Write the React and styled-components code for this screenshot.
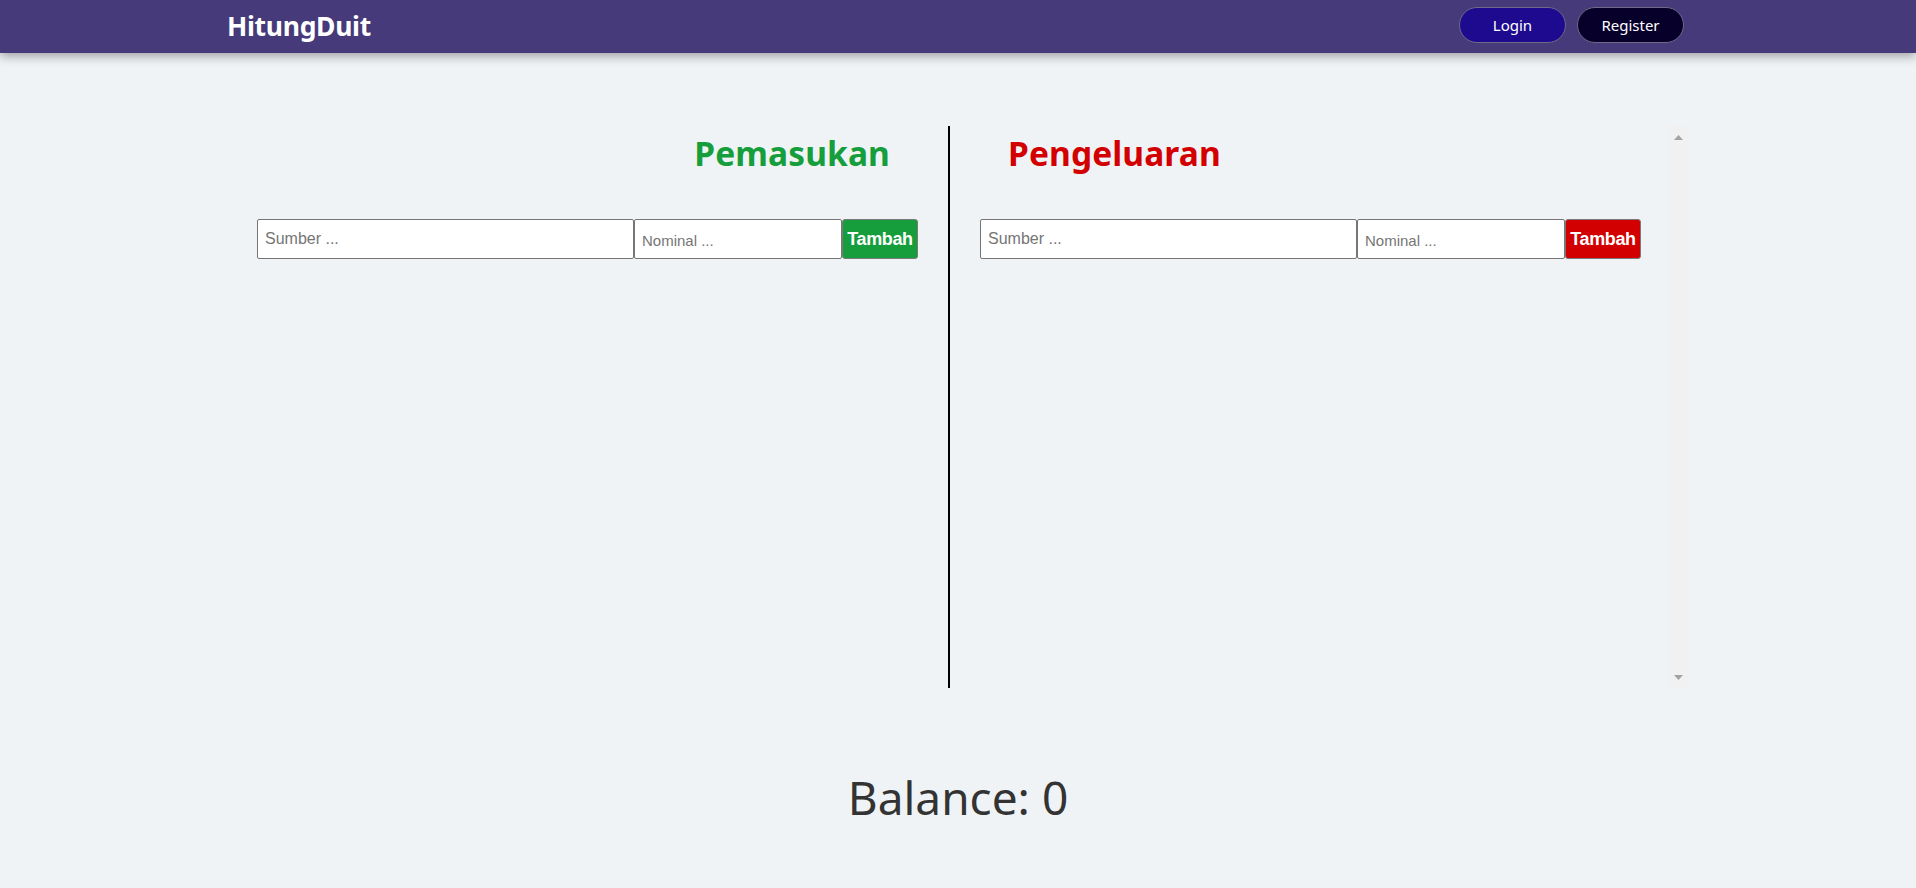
import React from "react";
import styled, { createGlobalStyle } from "styled-components";

const GlobalStyle = createGlobalStyle`
  * {
    box-sizing: border-box;
  }
  body {
    margin: 0;
    background-color: #eff3f6;
    font-family: "Noto Sans", "Open Sans", sans-serif;
  }
`;

const Arrow = ({ down }) => (
  <svg width="9" height="5" viewBox="0 0 9 5">
    <polygon points={down ? "0,0 9,0 4.5,5" : "4.5,0 9,5 0,5"} fill="#a3a3a3" />
  </svg>
);

const App = () => {
  return (
    <>
      <GlobalStyle />
      <Navbar>
        <NavInner>
          <Logo>HitungDuit</Logo>
          <NavButtons>
            <NavButton $bg="#1e0a8e">Login</NavButton>
            <NavButton $bg="#07002b">Register</NavButton>
          </NavButtons>
        </NavInner>
      </Navbar>
      <Main>
        <Board>
          <Columns>
            <Column $side="left">
              <Heading $color="#159e3b" $align="right">
                Pemasukan
              </Heading>
              <InputRow>
                <SourceInput placeholder="Sumber ..." />
                <AmountInput placeholder="Nominal ..." />
                <AddButton $bg="#159e3b">Tambah</AddButton>
              </InputRow>
            </Column>
            <Column $side="right">
              <Heading $color="#d20000" $align="left">
                Pengeluaran
              </Heading>
              <InputRow>
                <SourceInput placeholder="Sumber ..." />
                <AmountInput placeholder="Nominal ..." />
                <AddButton $bg="#d20000">Tambah</AddButton>
              </InputRow>
            </Column>
          </Columns>
          <ScrollTrack>
            <Arrow />
            <Arrow down />
          </ScrollTrack>
        </Board>
        <Balance>Balance: 0</Balance>
      </Main>
    </>
  );
};

export default App;

const Navbar = styled.nav`
  height: 53px;
  background-color: #463a7a;
  box-shadow: 0 3px 10px rgba(0, 0, 0, 0.35);
  position: relative;
  z-index: 1;
`;

const NavInner = styled.div`
  width: 1462px;
  height: 100%;
  margin: 0 auto;
  display: flex;
  align-items: center;
  justify-content: space-between;
  padding-right: 5px;
`;

const Logo = styled.div`
  color: #fff;
  font-size: 26.5px;
  font-weight: 700;
  letter-spacing: -0.3px;
  margin-top: -2px;
`;

const NavButtons = styled.div`
  display: flex;
  gap: 11px;
  margin-top: -3px;
`;

const NavButton = styled.button`
  width: 107px;
  height: 36px;
  border-radius: 18px;
  border: 1px solid #6f6a86;
  background-color: ${(p) => p.$bg};
  color: #fff;
  font-family: "Noto Sans", sans-serif;
  font-size: 15px;
  cursor: pointer;
`;

const Main = styled.main`
  padding-top: 73px;
`;

const Board = styled.div`
  width: 1462px;
  height: 562px;
  margin: 0 auto;
  display: flex;
`;

const Columns = styled.div`
  flex: 1;
  overflow-y: auto;
  display: grid;
  grid-template-columns: 1fr 1fr;
`;

const ScrollTrack = styled.div`
  width: 21px;
  background-color: #f1f1f1;
  display: flex;
  flex-direction: column;
  align-items: center;
  justify-content: space-between;
  padding: 9px 0 8px;

  svg {
    display: block;
  }
`;

const Column = styled.section`
  padding: 0 30px;
  border-right: ${(p) => (p.$side === "left" ? "2px solid #000" : "none")};
  height: 562px;
`;

const Heading = styled.h2`
  margin: 6px 0 0;
  line-height: 43px;
  font-size: 33.5px;
  font-weight: 700;
  color: ${(p) => p.$color};
  text-align: ${(p) => p.$align};
  padding: 0 28px;
  letter-spacing: 0.1px;
`;

const InputRow = styled.div`
  display: flex;
  margin-top: 44px;
  height: 40px;
`;

const BaseInput = styled.input`
  height: 40px;
  border: 1px solid #767676;
  border-radius: 2px;
  background: #fff;
  font-family: "Liberation Sans", Arial, sans-serif;
  padding: 0 7px;
  outline: none;
  &::placeholder {
    color: #757575;
  }
`;

const SourceInput = styled(BaseInput)`
  width: 377px;
  font-size: 16px;
`;

const AmountInput = styled(BaseInput)`
  width: 208px;
  font-size: 15px;
  padding-top: 2px;
`;

const AddButton = styled.button`
  width: 76px;
  height: 40px;
  border: 1px solid #7a7a7a;
  border-radius: 3px;
  background-color: ${(p) => p.$bg};
  color: #fff;
  font-family: "Liberation Sans", Arial, sans-serif;
  font-size: 18px;
  font-weight: 700;
  padding: 0;
  letter-spacing: -0.4px;
`;

const Balance = styled.h1`
  margin: 78px 0 0;
  text-align: center;
  font-size: 46px;
  font-weight: 400;
  color: #333;
`;
